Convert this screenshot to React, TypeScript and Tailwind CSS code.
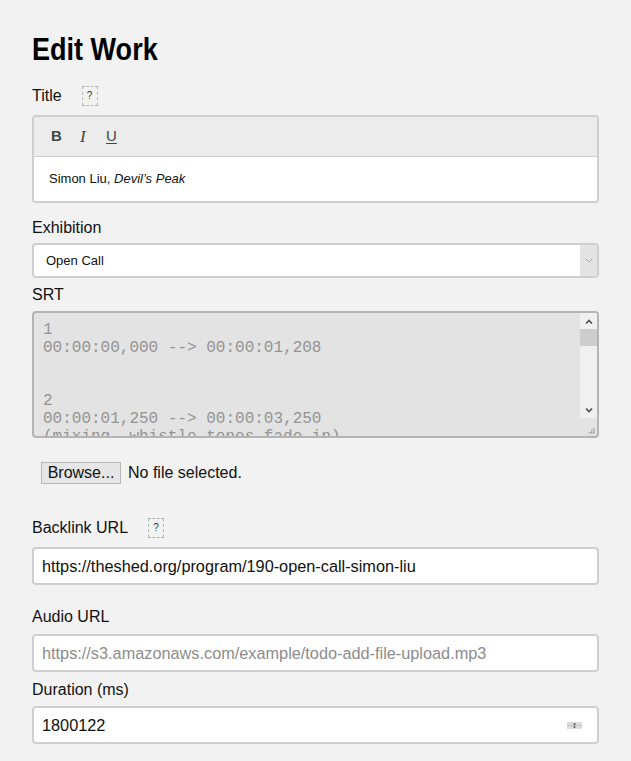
import { ReactNode } from 'react'

const sans = "font-['Liberation_Sans',Arial,sans-serif]"

function Help() {
  return (
    <span className="ml-5 flex h-5 w-4 items-center justify-center border border-dashed border-[#b4b4b4] text-[10px] leading-none text-[#333]">
      ?
    </span>
  )
}

function Label({ children, help, className }: { children: ReactNode; help?: boolean; className?: string }) {
  return (
    <div className={`flex h-5 items-center text-[16px] leading-5 text-[#111] ${className ?? ''}`}>
      <span>{children}</span>
      {help && <Help />}
    </div>
  )
}

function TextInput({ value, placeholder, className, right }: { value?: string; placeholder?: string; className?: string; right?: ReactNode }) {
  return (
    <div className={`flex h-[38px] items-center rounded-[4px] border-2 border-[#cfcfcf] bg-white pl-2 pr-2 text-[16.3px] ${className ?? ''}`}>
      <span className={value ? 'text-[#111]' : 'text-[#8c8c8c]'}>{value ?? placeholder}</span>
      {right && <span className="ml-auto mr-[7px] flex">{right}</span>}
    </div>
  )
}

const srt = [
  '1',
  '00:00:00,000 --> 00:00:01,208',
  '',
  '',
  '2',
  '00:00:01,250 --> 00:00:03,250',
  '(mixing, whistle tones fade in)',
]

export default function App() {
  return (
    <div className={`min-h-screen bg-[#f2f2f2] px-8 pb-8 ${sans}`}>
      <h1 className="pt-[33px] text-[32px] font-bold leading-[32px] text-black">
        <span className="inline-block origin-left scale-x-[0.845]">Edit Work</span>
      </h1>

      <Label help className="mt-[21px]">Title</Label>
      <div className="mt-[9px] overflow-hidden rounded-[4px] border-2 border-[#cfcfcf]">
        <div className="flex h-10 items-center border-b border-[#cfcfcf] bg-[#ececec] pl-[17px] text-[#444]">
          <span className="w-[29px] text-[15px] font-bold">B</span>
          <span className="w-[26px] font-['Liberation_Serif',serif] text-[17px] italic">I</span>
          <span className="text-[15px] underline underline-offset-2">U</span>
        </div>
        <div className="flex h-[44px] items-center bg-white pl-[15px] text-[13px] text-[#111]">
          Simon Liu,&nbsp;<em>Devil’s Peak</em>
        </div>
      </div>

      <Label className="mt-[15px]">Exhibition</Label>
      <div className="mt-[5px] flex h-[35px] overflow-hidden rounded-[4px] border-2 border-[#cfcfcf] bg-white">
        <div className="flex flex-1 items-center pl-3 text-[13px] text-[#111]">Open Call</div>
        <div className="flex w-[17px] items-center justify-center bg-[#e4e4e4]">
          <svg width="8" height="5" viewBox="0 0 8 5" fill="none" stroke="#a6a6a6" strokeWidth="1">
            <path d="M0.5 0.5 L4 4 L7.5 0.5" />
          </svg>
        </div>
      </div>

      <Label className="mt-[7px]">SRT</Label>
      <div className="mt-[6px] flex h-[127px] overflow-hidden rounded-[4px] border-2 border-[#b4b4b4] bg-[#e3e3e3]">
        <div className="flex-1 overflow-hidden whitespace-pre pl-[9px] pt-[9px] font-['Liberation_Mono','Courier_New',monospace] text-[16px] leading-[17.8px] text-[#939393]">
          {srt.map((line, i) => (
            <div key={i} className="h-[17.8px]">{line}</div>
          ))}
        </div>
        <div className="flex w-[17px] flex-col">
          <div className="flex h-[105px] flex-col bg-[#f0f0f0]">
            <div className="flex h-[16px] items-center justify-center">
              <svg width="8" height="5" viewBox="0 0 8 5" fill="none" stroke="#505050" strokeWidth="1.6">
                <path d="M1 4.5 L4 1.5 L7 4.5" />
              </svg>
            </div>
            <div className="h-[17px] bg-[#cdcdcd]" />
            <div className="flex-1" />
            <div className="flex h-[16px] items-center justify-center">
              <svg width="8" height="5" viewBox="0 0 8 5" fill="none" stroke="#505050" strokeWidth="1.6">
                <path d="M1 0.5 L4 3.5 L7 0.5" />
              </svg>
            </div>
          </div>
          <div className="flex flex-1 items-end justify-end pb-[2px] pr-[2px]">
            <svg width="7" height="7" viewBox="0 0 7 7" fill="#a0a0a0">
              <rect x="5" y="1" width="1.5" height="1.5" />
              <rect x="3" y="3" width="1.5" height="1.5" />
              <rect x="5" y="3" width="1.5" height="1.5" />
              <rect x="1" y="5" width="1.5" height="1.5" />
              <rect x="3" y="5" width="1.5" height="1.5" />
              <rect x="5" y="5" width="1.5" height="1.5" />
            </svg>
          </div>
        </div>
      </div>

      <div className="mt-[23px] ml-[9px] flex items-center text-[16px] text-[#111]">
        <span className="flex h-[22px] w-20 items-center justify-center border border-[#b8b8b8] bg-[#e6e6e6]">Browse...</span>
        <span className="ml-[7px]">No file selected.</span>
      </div>

      <Label help className="mt-[33px]">Backlink URL</Label>
      <TextInput className="mt-[9px]" value="https://theshed.org/program/190-open-call-simon-liu" />

      <Label className="mt-[22px]">Audio URL</Label>
      <TextInput className="mt-[7px]" placeholder="https://s3.amazonaws.com/example/todo-add-file-upload.mp3" />

      <Label className="mt-[8px]">Duration (ms)</Label>
      <TextInput
        className="mt-[6px]"
        value="1800122"
        right={
          <svg width="15" height="7" viewBox="0 0 15 7">
            <rect x="0" y="0" width="15" height="7" fill="#dedede" />
            <rect x="0" y="3" width="15" height="1" fill="#c4c4c4" />
            <path d="M6 2.5 L7.5 1 L9 2.5 Z" fill="#222" />
            <path d="M6 4.5 L7.5 6 L9 4.5 Z" fill="#222" />
          </svg>
        }
      />
    </div>
  )
}
